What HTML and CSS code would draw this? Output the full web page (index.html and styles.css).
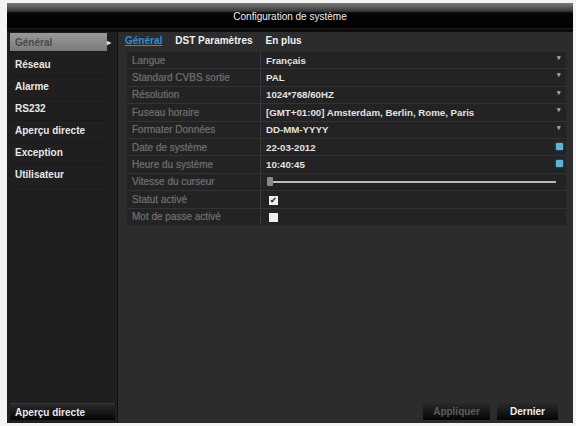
FILE: index.html
```html
<!DOCTYPE html>
<html lang="fr">
<head>
  <meta charset="UTF-8" />
  <title>Configuration de système</title>
  <link rel="stylesheet" href="styles.css">
</head>
<body>

<div class="window">
  <header class="titlebar">Configuration de système</header>

  <div class="content">
    <aside class="sidebar">
      <ul class="menu">
        <li class="active">Général <span class="caret">▸</span></li>
        <li>Réseau</li>
        <li>Alarme</li>
        <li>RS232</li>
        <li>Aperçu directe</li>
        <li>Exception</li>
        <li>Utilisateur</li>
      </ul>
      <button class="side-btn">Aperçu directe</button>
    </aside>

    <main class="panel">
      <nav class="tabs">
        <a class="active">Général</a>
        <a>DST Paramètres</a>
        <a>En plus</a>
      </nav>

      <table class="settings">
        <tr><td class="lbl">Langue</td><td class="val">Français <span class="drop">▾</span></td></tr>
        <tr><td class="lbl">Standard CVBS sortie</td><td class="val">PAL <span class="drop">▾</span></td></tr>
        <tr><td class="lbl">Résolution</td><td class="val">1024*768/60HZ <span class="drop">▾</span></td></tr>
        <tr><td class="lbl">Fuseau horaire</td><td class="val">[GMT+01:00] Amsterdam, Berlin, Rome, Paris <span class="drop">▾</span></td></tr>
        <tr><td class="lbl">Formater Données</td><td class="val">DD-MM-YYYY <span class="drop">▾</span></td></tr>
        <tr><td class="lbl">Date de système</td><td class="val">22-03-2012 <span class="pick"></span></td></tr>
        <tr><td class="lbl">Heure du système</td><td class="val">10:40:45 <span class="pick"></span></td></tr>
        <tr><td class="lbl">Vitesse du curseur</td><td class="val"><div class="slider"><span class="thumb"></span></div></td></tr>
        <tr><td class="lbl">Statut activé</td><td class="val"><span class="check">✔</span></td></tr>
        <tr><td class="lbl">Mot de passe activé</td><td class="val"><span class="check"></span></td></tr>
      </table>

      <div class="actions">
        <button class="btn dim">Appliquer</button>
        <button class="btn">Dernier</button>
      </div>
    </main>
  </div>
</div>

</body>
</html>
```

FILE: styles.css
```css
body {
  margin:0; background:#f4f4f4;
  font-family: "Liberation Sans", Arial, sans-serif;
  font-size:10px; color:#e6e6e6;
}
.window {
  margin:3px 3px 3px 7px;
  height:420px;
  display:flex; flex-direction:column;
  background:#000;
}
.titlebar {
  height:25px;
  background:linear-gradient(#7a7a7a 0, #3a3a3a 8px, #050505 10px, #000 100%);
  color:#eee; text-align:center;
  line-height:27px;
  border-bottom:1px solid #1c1c1c;
}
.content {
  flex:1; display:flex;
  padding-top:3px;
  background:#0c0c0c;
}

/* menu de gauche */
.sidebar {
  width:111px;
  display:flex; flex-direction:column;
  background:#1f1f1f;
  border-right:1px solid #101010;
  padding:1px 0 3px 3px;
  box-sizing:border-box;
}
.menu {
  list-style:none; margin:0; padding:0; flex:1;
}
.menu li {
  height:22px; line-height:20px;
  padding-left:5px;
  font-weight:700; color:#e8e8e8;
  width:97px;
  border-bottom:1px solid #191919;
  box-sizing:border-box;
}
.menu li.active {
  height:19px; line-height:19px;
  background:linear-gradient(#9a9a9a, #7a7a7a);
  color:#4a4a4a;
  position:relative;
  margin-bottom:3px;
}
.menu li .caret {
  position:absolute; right:-4px; top:0;
  color:#ddd; font-size:8px;
}
.side-btn {
  width:105px; height:17px; margin-bottom:0;
  border:none; border-top:1px solid #3a3a3a;
  background:linear-gradient(#2a2a2a, #050505);
  color:#e8e8e8; font:700 10px "Liberation Sans", Arial, sans-serif;
  text-align:left; padding-left:5px;
}

/* panneau principal */
.panel {
  flex:1;
  display:flex; flex-direction:column;
  background:#2c2c2c;
  padding:0 7px 3px 7px;
}
.tabs {
  display:flex; gap:13px;
  height:17px; align-items:center;
  margin-bottom:3px;
}
.tabs a {
  font-weight:700; color:#f0f0f0;
}
.tabs a.active {
  color:#2f8fd0;
  text-decoration:underline;
}
.settings {
  width:439px;
  margin-left:2px;
  border-collapse:collapse;
  background:#232323;
}
.settings td {
  height:16.4px; padding:0;
  border-top:1px solid #333;
}
.settings tr:first-child td { border-top:none; }
.lbl {
  width:128px; padding-left:5px !important;
  color:#6c6c6c;
  text-shadow:0 0 1px #555;
  border-right:1px solid #383838;
}
.val {
  padding-left:5px !important;
  font-weight:700; font-size:9.7px; color:#e2e2e2;
  position:relative;
}
.drop {
  position:absolute; right:5px; top:2px;
  font-size:7px; color:#aaa;
}
.pick {
  position:absolute; right:3px; top:4px;
  width:7px; height:7px;
  background:#59b6d8; border-radius:1px;
  box-shadow:0 0 2px #3a9cc0;
}
.slider {
  position:relative; height:2px; margin:0 10px 0 3px;
  background:#bbb;
}
.thumb {
  position:absolute; left:-2px; top:-4px;
  width:6px; height:9px; background:#888; border-radius:1px;
}
.check {
  display:inline-block; width:9px; height:9px; margin-left:3px;
  background:#eee; color:#333;
  font-size:8px; line-height:9px; text-align:center;
  vertical-align:middle;
}
.actions {
  margin-top:auto;
  display:flex; justify-content:flex-end; gap:7px;
  padding-right:8px;
}
.btn {
  height:17px;
  border:none;
  background:linear-gradient(#2a2a2a, #050505);
  font:700 10px "Liberation Sans", Arial, sans-serif;
  color:#eee;
  width:61px;
}
.btn.dim { color:#5c5c5c; width:67px; }
```
